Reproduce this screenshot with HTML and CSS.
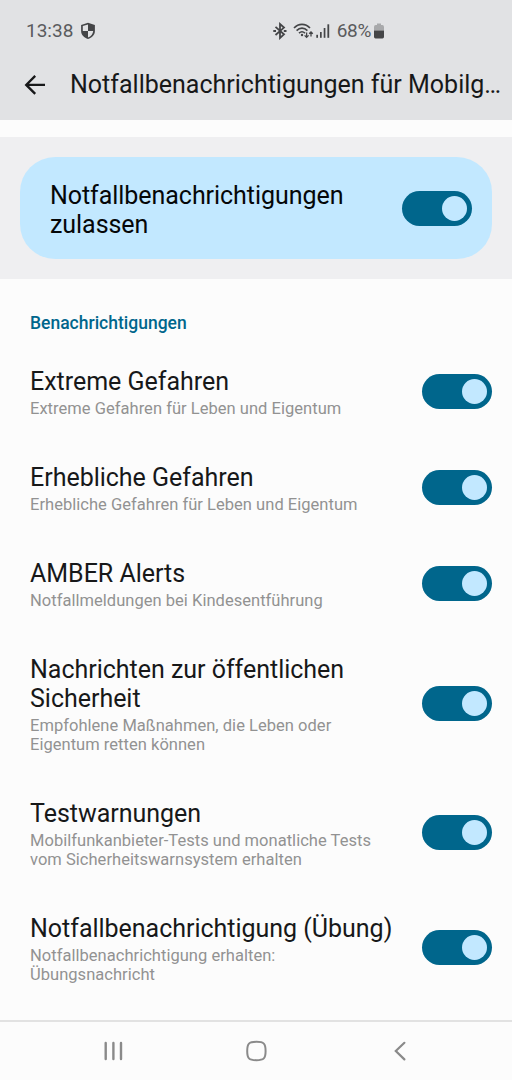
FILE: index.html
```html
<!DOCTYPE html>
<html lang="de">
<head>
  <meta charset="UTF-8">
  <meta name="viewport" content="width=device-width, initial-scale=1.0">
  <title>Notfallbenachrichtigungen</title>
  <link rel="stylesheet" href="styles.css">
</head>
<body>
  <header class="header">
    <div class="statusbar">
      <span class="time">13:38</span>
      <svg class="shield" width="16" height="18" viewBox="0 0 16 18">
        <path d="M8 0.8 L14.9 3 V9 C14.9 12.8 11.8 15.8 8 17 C4.2 15.8 1.1 12.8 1.1 9 V3 Z" fill="#444547"/>
        <path d="M8 2.5 V9 H2.8 V4.1 Z M8 9 H13.2 C13 12 11 14.3 8 15.5 Z" fill="#e1e2e4"/>
      </svg>
      <div class="status-icons">
        <svg width="14" height="18" viewBox="0 0 14 18" fill="none" stroke="#444547" stroke-width="1.8">
          <path d="M2.5 4.8 L11 12.3 L7 16 V2 L11 5.6 L2.5 13"/>
          <path d="M0.3 9 H3 M10.8 9 H13.5"/>
        </svg>
        <svg class="wifi" width="21" height="18" viewBox="0 0 21 18" fill="none" stroke="#444547" stroke-width="1.6">
          <path d="M1 6 C5.5 1.2 12.5 1.2 17 6"/>
          <path d="M3.6 8.6 C6.8 5.3 11.2 5.3 14.4 8.6"/>
          <path d="M6 11.2 C7.9 9.4 10.1 9.4 12 11.2"/>
          <circle cx="9" cy="13" r="1.2" fill="#444547" stroke="none"/>
          <path d="M13.6 10.5 V15 M11.6 13.4 L13.6 15.4 L15.6 13.4 M18 14.5 V10 M16.2 11.8 L18 10 L19.8 11.8" stroke-width="1.3"/>
        </svg>
        <svg class="signal" width="14" height="18" viewBox="0 0 14 18" fill="#444547">
          <rect x="0.3" y="12.8" width="1.7" height="3"/>
          <rect x="4" y="10" width="1.7" height="5.8"/>
          <rect x="7.7" y="6" width="1.7" height="9.8"/>
          <rect x="11.4" y="2.3" width="1.8" height="13.5"/>
        </svg>
        <span class="percent">68%</span>
        <svg width="10" height="18" viewBox="0 0 10 18">
          <path d="M3 1.5 H7 V3 H8.3 Q10 3 10 5 V8.5 H0 V5 Q0 3 1.7 3 H3 Z" fill="#a8a9ab"/>
          <path d="M0 8.5 H10 V14.8 Q10 16.5 8.5 16.5 H1.5 Q0 16.5 0 14.8 Z" fill="#444547"/>
        </svg>
      </div>
    </div>
    <div class="titlebar">
      <svg class="back" width="22" height="22" viewBox="0 0 22 22" fill="none" stroke="#171819" stroke-width="2.3">
        <path d="M11.2 1.9 L2.2 10.9 L11.2 19.9 M2.2 10.9 H21"/>
      </svg>
      <h1 class="title">Notfallbenachrichtigungen für Mobilg…</h1>
    </div>
  </header>

  <section class="main-switch">
    <div class="main-card">
      <div class="main-label">Notfallbenachrichtigungen zulassen</div>
      <div class="toggle"></div>
    </div>
  </section>

  <main class="settings">
    <h2 class="category">Benachrichtigungen</h2>
    <div class="row">
      <div class="text">
        <div class="name">Extreme Gefahren</div>
        <div class="summary">Extreme Gefahren für Leben und Eigentum</div>
      </div>
      <div class="toggle"></div>
    </div>
    <div class="row">
      <div class="text">
        <div class="name">Erhebliche Gefahren</div>
        <div class="summary">Erhebliche Gefahren für Leben und Eigentum</div>
      </div>
      <div class="toggle"></div>
    </div>
    <div class="row">
      <div class="text">
        <div class="name">AMBER Alerts</div>
        <div class="summary">Notfallmeldungen bei Kindesentführung</div>
      </div>
      <div class="toggle"></div>
    </div>
    <div class="row">
      <div class="text">
        <div class="name">Nachrichten zur öffentlichen Sicherheit</div>
        <div class="summary">Empfohlene Maßnahmen, die Leben oder Eigentum retten können</div>
      </div>
      <div class="toggle"></div>
    </div>
    <div class="row">
      <div class="text">
        <div class="name">Testwarnungen</div>
        <div class="summary">Mobilfunkanbieter-Tests und monatliche Tests vom Sicherheitswarnsystem erhalten</div>
      </div>
      <div class="toggle"></div>
    </div>
    <div class="row">
      <div class="text">
        <div class="name">Notfallbenachrichtigung (Übung)</div>
        <div class="summary">Notfallbenachrichtigung erhalten: Übungsnachricht</div>
      </div>
      <div class="toggle"></div>
    </div>
  </main>

  <nav class="navbar">
    <svg width="22" height="22" viewBox="0 0 22 22" fill="none" stroke="#8a8a8a" stroke-width="2.4" stroke-linecap="round">
      <path d="M3.7 3 V19 M11.4 3 V19 M19 3 V19"/>
    </svg>
    <svg width="22" height="22" viewBox="0 0 22 22" fill="none" stroke="#8a8a8a" stroke-width="2">
      <path d="M10.4 1.8 C17.9 1.8 19.6 3.5 19.6 11 C19.6 18.5 17.9 20.2 10.4 20.2 C2.9 20.2 1.2 18.5 1.2 11 C1.2 3.5 2.9 1.8 10.4 1.8 Z"/>
    </svg>
    <svg width="22" height="22" viewBox="0 0 22 22" fill="none" stroke="#8a8a8a" stroke-width="2.2" stroke-linecap="round">
      <path d="M15.4 2.8 L6.8 11 L15.4 19.4"/>
    </svg>
  </nav>
</body>
</html>
```
FILE: styles.css
```css
* { box-sizing: border-box; }
body {
  margin: 0;
  width: 512px;
  height: 1080px;
  display: flex;
  flex-direction: column;
  background: #fcfcfc;
  font-family: Roboto, sans-serif;
  color: #171819;
  overflow: hidden;
}
svg { display: block; flex-shrink: 0; }
.header {
  height: 120px;
  background: #e1e2e4;
}
.statusbar {
  display: flex;
  align-items: center;
  height: 50px;
  padding: 12px 128px 0 26px;
  font-size: 19px;
  line-height: 24px;
  color: #5a5b5d;
}
.shield { margin-left: 7px; }
.status-icons {
  display: flex;
  align-items: center;
  margin-left: auto;
}
.wifi { margin-left: 6px; }
.signal { margin-left: 2px; }
.percent {
  margin-left: 7px;
  margin-right: 3px;
  letter-spacing: -0.3px;
}
.titlebar {
  display: flex;
  align-items: center;
  height: 70px;
  padding: 0 8px 0 24px;
}
.title {
  margin: 0 0 0 24px;
  font-size: 25px;
  font-weight: 400;
  line-height: 30px;
  white-space: nowrap;
}
.main-switch {
  margin-top: 17px;
  padding: 20px;
  height: 142px;
  background: #efeff1;
}
.main-card {
  display: flex;
  align-items: center;
  justify-content: space-between;
  height: 102px;
  padding: 0 20px 0 30px;
  border-radius: 35px;
  background: #c2e8ff;
}
.main-label {
  width: 320px;
  padding-top: 3px;
  font-size: 25px;
  line-height: 29px;
  letter-spacing: -0.05px;
  color: #050708;
}
.toggle {
  display: flex;
  align-items: center;
  justify-content: flex-end;
  flex-shrink: 0;
  width: 70px;
  height: 35px;
  padding-right: 5px;
  border-radius: 18px;
  background: #00668c;
}
.toggle::after {
  content: "";
  width: 25px;
  height: 25px;
  border-radius: 50%;
  background: #c2e8ff;
}
.settings {
  flex: 1;
  padding: 0 20px 0 30px;
}
.category {
  margin: 0;
  height: 64px;
  padding-top: 34px;
  font-size: 17.5px;
  font-weight: 500;
  line-height: 20px;
  color: #00668c;
}
.row {
  display: flex;
  align-items: center;
  justify-content: space-between;
  padding: 24px 0;
}
.text {
  width: 365px;
  margin-bottom: -3px;
}
.name {
  margin-bottom: 3px;
  font-size: 25px;
  line-height: 29px;
  letter-spacing: -0.02px;
}
.summary {
  max-width: 350px;
  font-size: 16.5px;
  line-height: 19px;
  letter-spacing: 0.03px;
  color: #929292;
}
.navbar {
  display: flex;
  align-items: center;
  justify-content: space-between;
  height: 60px;
  padding: 0 101px 0 102px;
  border-top: 2px solid #e2e2e2;
}
```
